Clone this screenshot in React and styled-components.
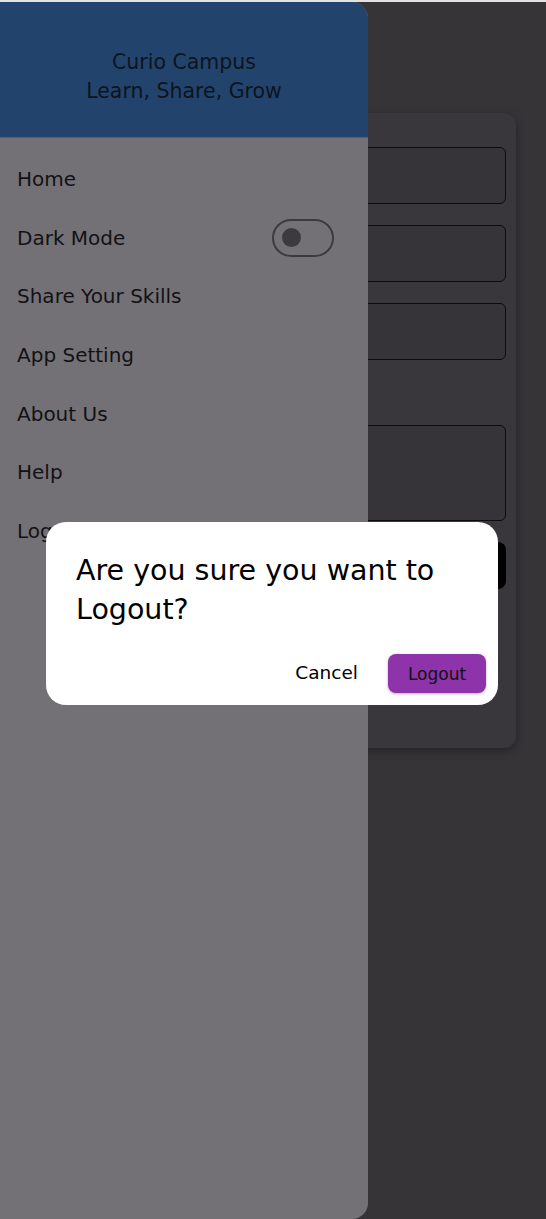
import React from 'react';
import styled, { createGlobalStyle } from 'styled-components';

const GlobalStyle = createGlobalStyle`
  html, body {
    margin: 0;
    padding: 0;
    height: 100%;
    background: #363437;
    font-family: "DejaVu Sans", "Noto Sans", sans-serif;
  }
  #root {
    height: 100%;
  }
  * {
    box-sizing: border-box;
  }
`;

const Screen = styled.div`
  display: flex;
  flex-direction: column;
  height: 100vh;
  overflow: hidden;
`;

const StatusStrip = styled.div`
  height: 2px;
  flex-shrink: 0;
  background: #e2e2e5;
`;

const Stage = styled.div`
  position: relative;
  flex: 1;
  padding: 111px 30px 0;
`;

const FormCard = styled.div`
  display: flex;
  flex-direction: column;
  height: 635px;
  padding: 34px 10px 0;
  background: #39373b;
  border-radius: 12px;
  box-shadow: 0 3px 10px rgba(0, 0, 0, 0.35);
`;

const Field = styled.div`
  height: ${(p) => p.$h}px;
  margin-top: ${(p) => p.$gap}px;
  border: 1.5px solid #0c0b0d;
  border-radius: 6px;
  background: #363438;
  &:first-child {
    margin-top: 0;
  }
`;

const SubmitBar = styled.div`
  height: 47px;
  margin-top: 21px;
  border-radius: 8px;
  background: #000;
`;

const Drawer = styled.aside`
  position: absolute;
  top: 0;
  left: 0;
  bottom: 0;
  width: 368px;
  display: flex;
  flex-direction: column;
  background: #747176;
  border-radius: 0 16px 16px 0;
  overflow: hidden;
`;

const DrawerHeader = styled.header`
  height: 136px;
  flex-shrink: 0;
  display: flex;
  flex-direction: column;
  align-items: center;
  padding-top: 46px;
  background: #22446c;
  border-bottom: 1px solid #5a5d68;
  color: #0c1420;
  font-size: 20.5px;
  line-height: 28.5px;
`;

const MenuList = styled.nav`
  display: flex;
  flex-direction: column;
  padding-top: 12px;
`;

const MenuItem = styled.div`
  display: flex;
  align-items: center;
  justify-content: space-between;
  height: 58.6px;
  padding: 0 34px 0 17px;
  font-size: 20px;
  color: #121114;
`;

const Toggle = styled.span`
  position: relative;
  width: 62px;
  height: 38px;
  border: 2.5px solid #3c3a3f;
  border-radius: 19px;
`;

const Knob = styled.span`
  position: absolute;
  left: 8px;
  top: 7px;
  width: 19px;
  height: 19px;
  border-radius: 50%;
  background: #3c3a3f;
`;

const DialogLayer = styled.div`
  position: absolute;
  inset: 0;
  display: flex;
  align-items: center;
  justify-content: center;
  padding: 6px 2px 0 0;
`;

const Dialog = styled.div`
  width: 452px;
  height: 183px;
  display: flex;
  flex-direction: column;
  padding: 29px 12px 12px 30px;
  background: #fff;
  border-radius: 20px;
`;

const DialogTitle = styled.h2`
  margin: 0;
  font-size: 28.5px;
  font-weight: 400;
  line-height: 39px;
  color: #000;
`;

const Actions = styled.div`
  margin-top: auto;
  display: flex;
  justify-content: flex-end;
  align-items: center;
  gap: 18px;
`;

const TextButton = styled.button`
  padding: 7px 12px 9px;
  border: none;
  background: transparent;
  font-family: inherit;
  font-size: 18.5px;
  color: #000;
`;

const FilledButton = styled.button`
  width: 98px;
  height: 39px;
  border: none;
  border-radius: 8px;
  background: #8e33a9;
  box-shadow: 0 1px 3px rgba(0, 0, 0, 0.3);
  font-family: inherit;
  font-size: 17px;
  color: #111;
`;

const menu = ['Home', 'Dark Mode', 'Share Your Skills', 'App Setting', 'About Us', 'Help', 'Logout'];

export default function App() {
  return (
    <Screen>
      <GlobalStyle />
      <StatusStrip />
      <Stage>
        <FormCard>
          <Field $h={57} $gap={0} />
          <Field $h={57} $gap={21} />
          <Field $h={57} $gap={21} />
          <Field $h={96} $gap={65} />
          <SubmitBar />
        </FormCard>

        <Drawer>
          <DrawerHeader>
            <div>Curio Campus</div>
            <div>Learn, Share, Grow</div>
          </DrawerHeader>
          <MenuList>
            {menu.map((item) => (
              <MenuItem key={item}>
                {item}
                {item === 'Dark Mode' && (
                  <Toggle>
                    <Knob />
                  </Toggle>
                )}
              </MenuItem>
            ))}
          </MenuList>
        </Drawer>

        <DialogLayer>
          <Dialog>
            <DialogTitle>Are you sure you want to Logout?</DialogTitle>
            <Actions>
              <TextButton>Cancel</TextButton>
              <FilledButton>Logout</FilledButton>
            </Actions>
          </Dialog>
        </DialogLayer>
      </Stage>
    </Screen>
  );
}
